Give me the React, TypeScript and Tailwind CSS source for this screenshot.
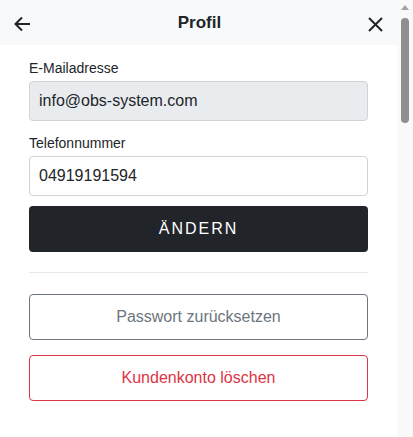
import React from "react";

export default function App() {
  return (
    <div className="flex w-[413px] h-[437px] overflow-hidden bg-white" style={{ fontFamily: '"Liberation Sans", Arial, sans-serif' }}>
      <div className="flex-1 flex flex-col">
        <div className="h-[45px] bg-[#f8f9fa] flex items-center justify-between pl-[13px] pr-[14px]">
          <svg className="mt-[3px]" width="18" height="18" viewBox="0 0 18 18" fill="none" stroke="#212529" strokeWidth="2">
            <path d="M17 9H2.5" />
            <path d="M9 2.5L2.5 9L9 15.5" />
          </svg>
          <div className="text-[17px] font-bold text-[#212529]">Profil</div>
          <svg className="mt-[3px]" width="15" height="15" viewBox="0 0 15 15" fill="none" stroke="#212529" strokeWidth="2">
            <path d="M1 1L14 14M14 1L1 14" />
          </svg>
        </div>
        <div className="px-[29px] pt-[13px] flex flex-col">
          <label className="text-[14px] leading-[21px] text-[#212529] mb-[2px]">E-Mailadresse</label>
          <div className="h-[40px] border border-[#ced4da] rounded-[4px] bg-[#e9ecef] flex items-center px-[9px] text-[16px] text-[#212529]">info@obs-system.com</div>
          <label className="text-[14px] leading-[21px] text-[#212529] mt-[12px] mb-[2px]">Telefonnummer</label>
          <div className="h-[40px] border border-[#ced4da] rounded-[4px] bg-white flex items-center px-[9px] text-[16px] text-[#212529]">04919191594</div>
          <button className="mt-[10px] h-[46px] rounded-[4px] bg-[#212529] text-white text-[16px] tracking-[2px]">ÄNDERN</button>
          <div className="mt-[20px] h-px bg-[#e5e7ea]" />
          <button className="mt-[21px] h-[46px] rounded-[4px] border border-[#6c757d] text-[#6c757d] text-[16px] bg-white">Passwort zurücksetzen</button>
          <button className="mt-[15px] h-[46px] rounded-[4px] border border-[#dc3545] text-[#dc3545] text-[16px] bg-white">Kundenkonto löschen</button>
        </div>
      </div>
      <div className="w-[16px] bg-[#f9f9f9] flex flex-col items-center pt-[5px]">
        <div className="w-0 h-0 border-l-[4px] border-r-[4px] border-b-[5px] border-l-transparent border-r-transparent border-b-[#a3a3a3]" />
        <div className="mt-[8px] w-[8px] h-[105px] rounded-[4px] bg-[#8f8f8f]" />
      </div>
    </div>
  );
}
